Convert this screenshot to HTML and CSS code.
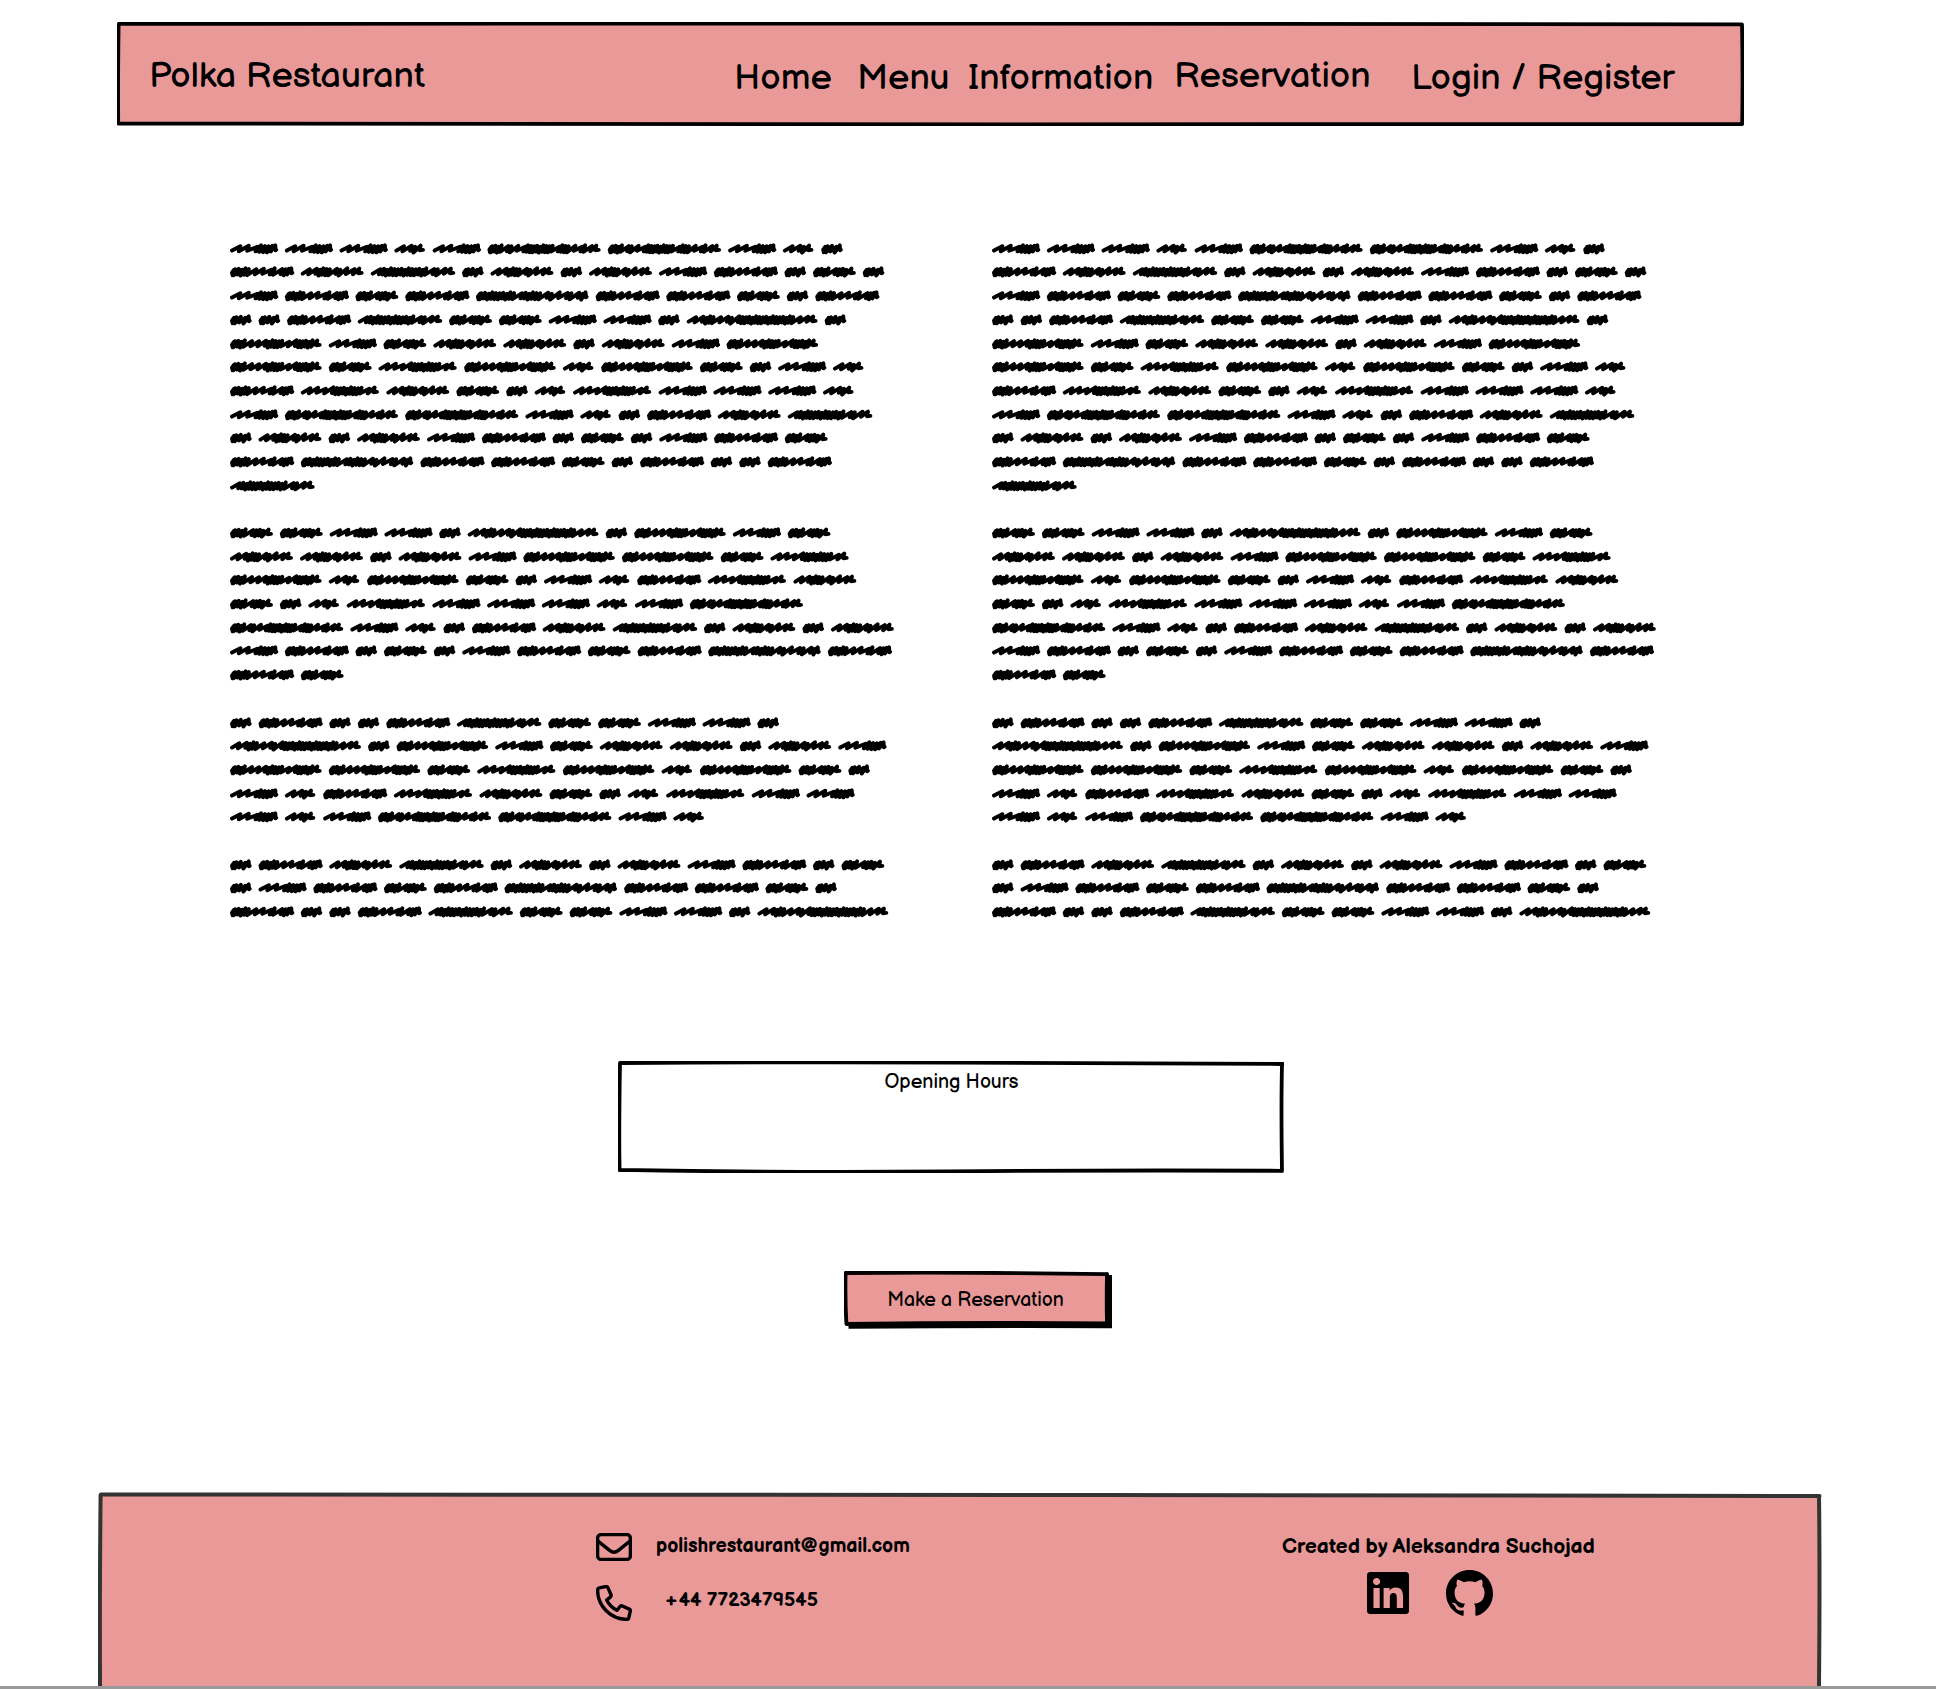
FILE: index.html
```html
<!DOCTYPE html>
<html lang="en">
<head>
<meta charset="utf-8">
<title>Polka Restaurant</title>
<link rel="stylesheet" href="styles.css">
</head>
<body>
<div class="page">
  <header class="header">
    <svg class="frame" viewBox="0 0 1627 104"><path class="frame-fill" d="M2 2 1625 3 1625 102 2 101Z"/><path class="frame-line" d="M2 1.8 Q400 1 800 1.6 T1625 2.4M1625 2.5Q1626 50 1625.2 102M1625 102Q1200 101.5 900 102.3T1 101.4M1.2 101.5Q.8 60 1.6 2.5"/></svg>
    <span class="brand">Polka Restaurant</span>
    <nav class="nav">
      <a class="link home">Home</a>
      <a class="link menu">Menu</a>
      <a class="link info">Information</a>
      <a class="link reservation">Reservation</a>
      <a class="link login">Login / Register</a>
    </nav>
  </header>

  <main class="main">
    <div class="columns">
      <div class="column"></div>
      <div class="column"></div>
    </div>
    <section class="hours">
      <svg class="frame" viewBox="0 0 666 112"><path class="frame-line" d="M2 2Q180 1 340 1.7T665 3M664 3Q663 45 664 110M664 109.8Q500 109 330 110.4T1.5 108.8M1.6 109Q.8 75 2 2"/></svg>
      <span class="hours-title">Opening Hours</span>
    </section>
    <button class="cta">
      <svg class="frame" viewBox="0 0 268 58"><path d="M4.5 4H268V57.2Q150 56.5 4.5 57.8Z"/><path class="frame-fill" d="M2 2 262 3 262 51 3 51Z"/><path class="frame-line" d="M2 2Q130 1 263 3.2M263 3Q262.4 28 263 52M263 52.3Q130 51 3 53M2.4 53Q1 28 1.6 2"/></svg>
      <span class="cta-label">Make a Reservation</span>
    </button>
  </main>

  <footer class="footer">
    <svg class="frame" viewBox="0 0 1724 194"><path class="frame-fill" d="M2 3 1721 4V194H2Z"/><path class="frame-line frame-soft" d="M3 2.4Q600 1.8 1000 3T1721.5 4M1721 4Q1722 80 1721 194M2 194Q1.6 90 2.6 3"/></svg>
    <div class="contact">
      <div class="contact-row">
        <svg class="icon-mail" viewBox="0 0 36 28"><rect x="1.6" y="1.6" width="32.8" height="24.8" rx="3.4"/><path d="M2 8.2 13.6 17.4Q18 21 22.4 17.4L34 8.2"/></svg>
        <span class="mail">polishrestaurant@gmail.com</span>
      </div>
      <div class="contact-row">
        <svg class="icon-phone" viewBox="0 0 36 36"><path d="M3.2 2.9 9.8 1.6Q11.2 1.3 11.9 2.6L15 9.7Q15.5 11 14.5 11.9L10.7 15.1Q14 22 20.9 25.3L24.1 21.5Q25 20.5 26.3 21L33.3 24.1Q34.6 24.8 34.3 26.2L32.8 32.8Q32.4 34.4 31 34.4C14.8 34.4 1.6 21.2 1.6 5Q1.6 3.3 3.2 2.9Z"/></svg>
        <span class="phone">+44 7723479545</span>
      </div>
    </div>
    <div class="credits">
      <span class="author">Created by Aleksandra Suchojad</span>
      <div class="social">
        <svg class="icon-linkedin" viewBox="0 32 448 448"><path d="M416 32H31.9C14.3 32 0 46.5 0 64.3v383.4C0 465.5 14.3 480 31.9 480H416c17.6 0 32-14.5 32-32.3V64.3c0-17.8-14.4-32.3-32-32.3zM135.4 416H69V202.2h66.5V416zm-33.2-243c-21.3 0-38.5-17.3-38.5-38.5S80.9 96 102.2 96c21.2 0 38.5 17.3 38.5 38.5 0 21.3-17.2 38.5-38.5 38.5zm282.1 243h-66.4V312c0-24.8-.5-56.7-34.5-56.7-34.6 0-39.9 27-39.9 54.9V416h-66.4V202.2h63.7v29.2h.9c8.9-16.8 30.6-34.5 62.9-34.5 67.2 0 79.7 44.3 79.7 101.9V416z"/></svg>
        <svg class="icon-github" viewBox="0 0 16 16"><path d="M8 0C3.58 0 0 3.58 0 8c0 3.54 2.29 6.53 5.47 7.59.4.07.55-.17.55-.38 0-.19-.01-.82-.01-1.49-2.01.37-2.53-.49-2.69-.94-.09-.23-.48-.94-.82-1.13-.28-.15-.68-.52-.01-.53.63-.01 1.08.58 1.23.82.72 1.21 1.87.87 2.33.66.07-.52.28-.87.51-1.07-1.78-.2-3.64-.89-3.64-3.95 0-.87.31-1.59.82-2.15-.08-.2-.36-1.02.08-2.12 0 0 .67-.21 2.2.82.64-.18 1.32-.27 2-.27.68 0 1.36.09 2 .27 1.53-1.04 2.2-.82 2.2-.82.44 1.1.16 1.92.08 2.12.51.56.82 1.27.82 2.15 0 3.07-1.87 3.75-3.65 3.95.29.25.54.73.54 1.48 0 1.07-.01 1.93-.01 2.2 0 .21.15.46.55.38A8.013 8.013 0 0016 8c0-4.42-3.58-8-8-8z"/></svg>
      </div>
    </div>
  </footer>
  <div class="bottom-rule"></div>
</div>
<script src="scribble.js"></script>
</body>
</html>
```
FILE: styles.css
```css
* { box-sizing: border-box; }

body {
  margin: 0;
  background: #fff;
  color: #000;
  font-family: "Balsamiq Sans", Inter, "Noto Sans", sans-serif;
  font-feature-settings: "cv11" 1;
}

.page {
  display: flex;
  flex-direction: column;
  width: 1936px;
  height: 1689px;
  overflow: hidden;
}

.frame {
  position: absolute;
  inset: 0;
  width: 100%;
  height: 100%;
}

.frame-fill { fill: #ea9999; }

.frame-line {
  fill: none;
  stroke: #000;
  stroke-width: 3.8;
  stroke-linecap: round;
}

.frame-soft { stroke: #333; stroke-width: 4; }

.header {
  position: relative;
  display: flex;
  flex-shrink: 0;
  width: 1627px;
  height: 104px;
  margin: 22px 0 0 117px;
  padding: 35px 0 0 32px;
  font-size: 36px;
  line-height: 40px;
  white-space: nowrap;
}

.brand {
  position: relative;
  width: 585px;
}

.nav { position: relative; display: flex; }

.link { padding-top: 2px; }
.home { width: 123px; }
.menu { width: 111px; }
.info { width: 206px; }
.reservation { width: 237px; padding-top: 0; }

.main {
  display: flex;
  flex-direction: column;
  height: 1366px;
  flex-shrink: 0;
  padding-top: 110.8px;
}

.columns {
  display: flex;
  gap: 62px;
  height: 824.7px;
  margin-left: 230px;
}

.column {
  display: flex;
  flex-direction: column;
  gap: 23.7px;
  width: 700px;
}

.scribble-line {
  display: block;
  width: 700px;
  height: 23.7px;
  fill: none;
  stroke: #000;
  stroke-width: 3.9;
  stroke-linecap: round;
  stroke-linejoin: round;
}

.hours {
  position: relative;
  width: 666px;
  height: 112px;
  margin-left: 617.5px;
  padding: 9px 0 0 2px;
  text-align: center;
  font-size: 19.6px;
  line-height: 24px;
}

.hours-title { position: relative; }

.cta {
  position: relative;
  width: 268px;
  height: 58px;
  margin: 98px 0 0 844px;
  padding: 0 5px 1px 0;
  border: 0;
  background: none;
  color: #000;
  font: inherit;
  font-size: 19.5px;
}

.cta-label { position: relative; }

.footer {
  position: relative;
  display: flex;
  flex-shrink: 0;
  width: 1724px;
  height: 194px;
  margin-left: 98px;
  font-size: 19.5px;
  font-weight: 700;
  line-height: 24px;
  overflow: hidden;
}

.contact {
  position: relative;
  display: flex;
  flex-direction: column;
  gap: 23.5px;
  width: 686px;
  padding: 41px 0 0 498px;
  white-space: nowrap;
}

.contact-row { display: flex; }

.icon-mail,
.icon-phone {
  flex-shrink: 0;
  width: 36px;
  height: 28px;
  fill: none;
  stroke: #000;
  stroke-width: 3.4;
  stroke-linejoin: round;
}

.icon-phone { height: 36px; }
.mail { margin: 1px 0 0 24px; }
.phone { margin: 4.5px 0 0 32px; font-size: 19.4px; }

.credits {
  position: relative;
  padding: 42.5px 0 0 498px;
  white-space: nowrap;
}

.author { display: block; font-size: 21px; }

.social {
  display: flex;
  gap: 37px;
  padding: 11.5px 0 0 85px;
}

.icon-linkedin { width: 42px; height: 42px; margin-top: 2px; }
.icon-github { width: 47px; height: 47px; }

.bottom-rule {
  height: 3px;
  flex-shrink: 0;
  background: #999;
}
```
FILE: scribble.js
```js
// Each scribbled word: [drawn width, advance, stroke rhythm], widths in thirds of a pixel.
// L is an open slanted stroke, T a tight one.
const words = {
  A: [145, 164.3, 'LLLTTTTT'],
  B: [92, 115, 'LLTL'],
  C: [65, 85.5, 'TTTT'],
  D: [129, 149.4, 'TTTTLTTTL'],
  E: [193, 212, 'TTTTTLLLTLTTT'],
  F: [189, 210, 'LLTTTTLTLLL'],
  G: [254, 274, 'LTTTTTTTTTTTTTLTLL'],
  H: [275, 296, 'TTTTLLLTTTTTLLTTTTTL'],
  I: [235, 257, 'LLLLTTTTTTTTLL'],
  J: [340, 361, 'TTTTLTLLTTTTTTTTTLTTTLLTLL'],
  K: [338, 359, 'TTTTTTTTTTLTTTTTLTLLTLTT'],
  L: [393, 414, 'LLTTTLLTLTTTTTTTTTTTTTTTTLLL']
};

const paragraphs = [
  ['AAABAJJABC', 'EFGCFCFAECDC', 'AEDEKEEDCE', 'CCEGDDAACLC', 'HADFFCFAH', 'HDIHBHDCAB',
   'EIFDCBIAAAB', 'AJJABCEFG', 'CFCFAECDCAED', 'EKEEDCECCE', 'G'],
  ['DDAACLCHAD', 'FFCFAHHDI', 'HBHDCABEIF', 'DCBIAAABAJ', 'JABCEFGCFCF', 'AECDCAEDEKE', 'ED'],
  ['CECCEGDDAAC', 'LCHADFFCFA', 'HHDIHBHDC', 'ABEIFDCBIAA', 'ABAJJAB'],
  ['CEFGCFCFAECD', 'CAEDEKEEDC', 'ECCEGDDAACL']
];

const tops = [0.9, 0.4, 1.5, 0, 0.8];
const lows = [0.9, 0, 1.1, 0.3, 0.7];
const round = n => n.toFixed(1);

function wordPath(key, left) {
  const [width, , rhythm] = words[key];
  const weights = [...rhythm].map(s => (s === 'L' ? 2.2 : 1));
  const unit = (width / 3 - 4) / weights.reduce((a, b) => a + b, 0);
  let x = left + 2;
  let d = weights[0] === 1
    ? `M${round(x + 2)} 9.8L${round(x)} 12.6L${round(x + 0.6)} 15.2`
    : `M${round(x)} 13.6`;
  weights.forEach((w, i) => {
    const tight = w === 1;
    const end = x + w * unit;
    const top = 8.3 + tops[i % 5];
    const low = (tight ? 14.5 : 13.8) + lows[i % 5] * (tight ? 1 : 0.5);
    if (i < weights.length - 1) {
      d += `L${round(end)} ${round(top)}L${round(end - (tight ? 1.8 : 1.6))} ${round(low)}`;
    } else if (tight) {
      d += `L${round(end - 1)} 8.4L${round(end - 0.8)} 13.2L${round(end)} 12.8`;
    } else {
      d += `L${round(end - 2.4)} 8.6L${round(end - 3.4)} 13.2L${round(end)} 12.9`;
    }
    x = end;
  });
  return d;
}

const markup = paragraphs.map(lines => '<div>' + lines.map(line => {
  let x = 0;
  const d = [...line].map(key => {
    const path = wordPath(key, x);
    x += words[key][1] / 3;
    return path;
  }).join('');
  return `<svg class="scribble-line"><path d="${d}"/></svg>`;
}).join('') + '</div>').join('');

document.querySelectorAll('.column').forEach(column => { column.innerHTML = markup; });
```
